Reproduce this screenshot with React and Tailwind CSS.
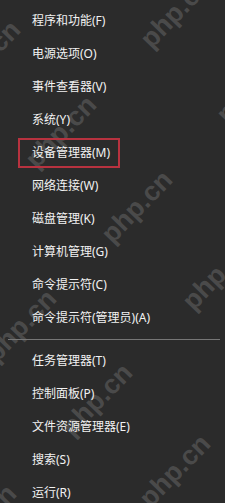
import React from "react";

const top = [
  "程序和功能(F)",
  "电源选项(O)",
  "事件查看器(V)",
  "系统(Y)",
  "设备管理器(M)",
  "网络连接(W)",
  "磁盘管理(K)",
  "计算机管理(G)",
  "命令提示符(C)",
  "命令提示符(管理员)(A)",
];
const bottom = ["任务管理器(T)", "控制面板(P)", "文件资源管理器(E)", "搜索(S)", "运行(R)"];

const marks = [
  [176, 12], [-15, 57], [252, 87], [61, 132], [137, 207],
  [218, 274], [21, 326], [97, 400], [175, 471], [-19, 521],
];

function Row({ label, highlight }) {
  if (highlight) {
    return (
      <div className="h-[33px] flex items-center">
        <div className="ml-[18px] w-[102px] h-[30px] border-2 border-[#b8323f] flex items-center pl-[12px]">
          {label}
        </div>
      </div>
    );
  }
  return <div className="h-[33px] flex items-center pl-[32px]">{label}</div>;
}

export default function App() {
  return (
    <div
      className="relative w-[225px] h-[503px] overflow-hidden bg-[#2b2b2b] text-[#f2f2f2] text-[12px] leading-none"
      style={{ fontFamily: '"Noto Sans", "Noto Sans CJK SC", sans-serif' }}
    >
      <div className="absolute inset-0 pointer-events-none" aria-hidden="true">
        {marks.map(([x, y], i) => (
          <div
            key={i}
            className="absolute text-[27px] font-bold text-[#4a4a4a] whitespace-nowrap leading-none"
            style={{
              left: x,
              top: y,
              transform: "translate(-50%, -50%) rotate(-46deg)",
              fontFamily: '"Liberation Sans", sans-serif',
            }}
          >
            php.cn
          </div>
        ))}
      </div>
      <div className="relative pt-[4px] flex flex-col">
        {top.map((t, i) => (
          <Row key={t} label={t} highlight={i === 4} />
        ))}
        <div className="h-[10px] flex items-center px-[8px] pr-[5px]">
          <div className="h-[1px] w-full bg-[#767676]" />
        </div>
        {bottom.map((t) => (
          <Row key={t} label={t} />
        ))}
      </div>
    </div>
  );
}
